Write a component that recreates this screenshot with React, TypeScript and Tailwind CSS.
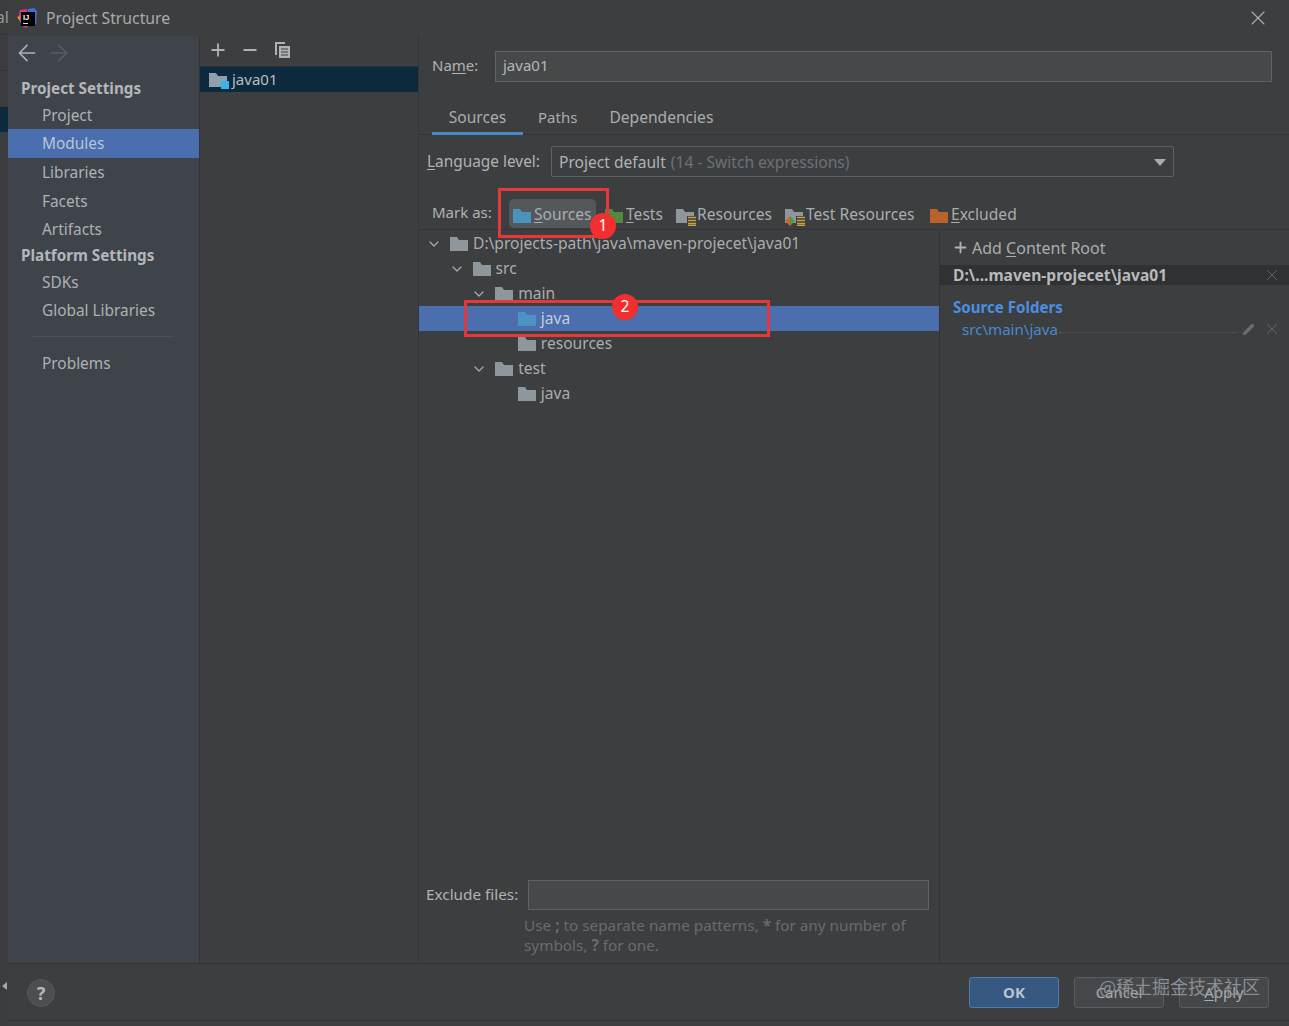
import type { ReactNode } from 'react'
import { ArrowLeft, ArrowRight, ChevronDown, Minus, Pencil, Plus, X } from 'lucide-react'

const FONT = "font-['Noto_Sans','Open_Sans',sans-serif]"

function Folder({ color = '#8e979c', className = '' }: { color?: string; className?: string }) {
  return (
    <svg width="18" height="15" viewBox="0 0 18 15" className={`shrink-0 ${className}`}>
      <path d="M0 1h7l2 3h9v11H0z" fill={color} />
    </svg>
  )
}

function Stack() {
  return (
    <svg width="9" height="10" viewBox="0 0 9 10" className="absolute right-[-2px] bottom-[-3px]">
      <rect width="9" height="10" fill="#3c3e40" />
      <path d="M1 1.5h8M1 4.5h8M1 7.5h8M1 9.5h8" stroke="#c9a13f" strokeWidth="1.4" />
    </svg>
  )
}

function MarkItem({ icon, children, w }: { icon: ReactNode; children: ReactNode; w: string }) {
  return (
    <div className={`flex h-[33px] shrink-0 items-center gap-[3px] pt-[4px] ${w}`}>
      {icon}
      <span className="whitespace-nowrap">{children}</span>
    </div>
  )
}

function TreeRow({ depth, open, label, color, selected }: { depth: number; open?: boolean; label: string; color?: string; selected?: boolean }) {
  return (
    <div className={`flex h-[25px] items-center ${selected ? 'bg-[#4b6eaf] text-[#c6cdd6]' : ''}`}>
      <div style={{ width: 7 + depth * 22.6 }} className="shrink-0" />
      <div className="w-[24px] shrink-0">{open && <ChevronDown size={16} strokeWidth={1.8} className="text-[#a9adb0]" />}</div>
      <Folder color={color} />
      <span className="ml-[5px] whitespace-nowrap">{label}</span>
    </div>
  )
}

function SideItem({ label, active, h = 'h-[28.5px]' }: { label: string; active?: boolean; h?: string }) {
  return (
    <div className={`flex items-center pl-[34px] text-[15.4px] ${h} ${active ? 'bg-[#4b6eaf] text-[#b9c5d6]' : 'pt-[2px] text-[#aeb1b3]'}`}>{label}</div>
  )
}

function SideHead({ label, h }: { label: string; h: string }) {
  return <div className={`flex items-center pl-[13px] text-[15.25px] font-bold text-[#b4b7b9] ${h}`}>{label}</div>
}

function FooterButton({ children, primary }: { children: ReactNode; primary?: boolean }) {
  return (
    <div className={`flex h-[31px] w-[90px] items-center justify-center rounded-[3px] border ${primary ? 'border-[#4c7db0] bg-[#365880] font-bold text-[#b6c4d4]' : 'border-[#5a5d5f] bg-[#45484a] text-[#a9acae]'}`}>
      {children}
    </div>
  )
}

export default function App() {
  return (
    <div className={`relative flex h-[1026px] w-[1289px] overflow-hidden bg-[#3c3e40] text-[15.6px] leading-none text-[#aaadaf] ${FONT}`}>
      {/* what shows of the main window behind the dialog */}
      <div className="flex w-[8px] shrink-0 flex-col overflow-hidden bg-[#3a3c3d]">
        <div className="h-[35px] whitespace-nowrap border-b border-[#323436] pt-[10px] text-[#999]"><span className="ml-[-4px]">al</span></div>
        <div className="h-[36px] border-b border-[#323436]" />
        <div className="mt-[36px] h-[25px] bg-[#0d293e]" />
        <div className="mt-[850px] ml-[2px] h-0 w-0 border-y-[4px] border-r-[5px] border-y-transparent border-r-[#aaa]" />
      </div>

      <div className="flex h-[1021px] min-w-0 flex-1 flex-col border-b border-[#2f3133]">
        {/* title bar */}
        <div className="flex h-[36px] shrink-0 items-center pl-[9px] pr-[19px]">
          <svg width="21" height="21" viewBox="0 0 21 21">
            <path d="M3 2l7-1 1 5-6 5H1z" fill="#e0317f" />
            <path d="M11 1l6-1 3 3-1 14-8-8z" fill="#3e6fd8" />
            <path d="M1 9l4 9 5 2 2-8z" fill="#d2408f" />
            <path d="M0 9l3-1v5z" fill="#f08b2d" />
            <rect x="4" y="4" width="14" height="14" fill="#000" />
            <rect x="6" y="15" width="5" height="1" fill="#ddd" />
            <text x="6" y="11.5" fontSize="7.5" fontWeight="700" fill="#fff" fontFamily="Liberation Sans, sans-serif">IJ</text>
          </svg>
          <span className="ml-[8px] pt-[2px] text-[15.75px] text-[#a9acae]">Project Structure</span>
          <X size={24} strokeWidth={1.1} className="ml-auto text-[#afb1b3]" />
        </div>

        <div className="flex min-h-0 flex-1">
          {/* settings sidebar */}
          <div className="flex w-[191px] shrink-0 flex-col bg-[#3f444b]">
            <div className="flex h-[34px] shrink-0 items-center gap-[6px] pl-[6px]">
              <ArrowLeft size={26} strokeWidth={1.5} className="text-[#afb1b3]" />
              <ArrowRight size={26} strokeWidth={1.5} className="text-[#585c60]" />
            </div>
            <SideHead label="Project Settings" h="h-[31px] mt-[3px]" />
            <SideItem label="Project" h="h-[25px] pb-[3px]" />
            <SideItem label="Modules" active />
            <SideItem label="Libraries" />
            <SideItem label="Facets" />
            <SideItem label="Artifacts" />
            <SideHead label="Platform Settings" h="h-[24px] pt-[2px]" />
            <SideItem label="SDKs" />
            <SideItem label="Global Libraries" />
            <div className="mx-[25px] mt-[12px] mb-[11px] h-px bg-[#4b5057]" />
            <SideItem label="Problems" />
          </div>

          {/* module list */}
          <div className="flex w-[220px] shrink-0 flex-col border-x border-[#333537]">
            <div className="flex h-[31px] shrink-0 items-center gap-[12px] border-b border-[#2f3133] pb-[3px] pl-[7.5px] text-[#afb1b3]">
              <Plus size={20} strokeWidth={2.2} />
              <Minus size={20} strokeWidth={2.2} />
              <svg width="17" height="18" viewBox="0 0 17 18" className="ml-[2.5px]">
                <path d="M1 1h10v2H3v11H1z" fill="#afb1b3" />
                <path d="M5 5h11v12H5z" fill="#afb1b3" />
                <path d="M7 8h7M7 11h7M7 14h7" stroke="#3c3e40" />
              </svg>
            </div>
            <div className="flex h-[25px] shrink-0 items-center bg-[#0d293e] pl-[9px] text-[15px] text-[#bbbec0]">
              <div className="relative">
                <Folder color="#8fa0ad" />
                <div className="absolute right-[-2px] bottom-[-2px] h-[8px] w-[8px] bg-[#35b6e6]" />
              </div>
              <span className="ml-[5px]">java01</span>
            </div>
          </div>

          {/* module editor */}
          <div className="flex min-w-0 flex-1 flex-col">
            <div className="flex h-[46px] shrink-0 items-end pl-[13px] pr-[17px]">
              <span className="mb-[9px] w-[63px] shrink-0 text-[15px] text-[#b0b3b5]">Na<span className="underline underline-offset-2">m</span>e:</span>
              <div className="flex h-[31px] flex-1 items-center border border-[#5e6264] bg-[#45494a] pb-[2px] pl-[7px] text-[15px] text-[#b5b7b9]">java01</div>
            </div>

            <div className="mt-[22px] flex h-[31px] shrink-0 items-start border-b border-[#323436] pl-[13px]">
              <div className="flex h-[31px] w-[91px] items-start justify-center border-b-[3px] border-[#4a88c7] pt-[6px]">Sources</div>
              <div className="ml-[15px] pt-[6px] text-[15px]">Paths</div>
              <div className="ml-[32px] pt-[6px]">Dependencies</div>
            </div>

            <div className="mt-[11px] flex h-[31px] shrink-0 items-center pl-[8px]">
              <span className="w-[124px] shrink-0 text-[15.4px] text-[#b0b3b5]"><span className="underline underline-offset-2">L</span>anguage level:</span>
              <div className="flex h-[31px] w-[623px] items-center rounded-[2px] border border-[#5e6264] bg-[#3c3f41] pl-[7px] pr-[7px] pt-[2px]">
                <span className="text-[#b0b3b5]">Project default</span>
                <span className="ml-[5px] text-[#6e7173]">(14 - Switch expressions)</span>
                <div className="ml-auto h-0 w-0 border-x-[6px] border-t-[7px] border-x-transparent border-t-[#a9acae]" />
              </div>
            </div>

            <div className="mt-[20px] flex h-[33px] shrink-0 items-center border-b border-[#323436] pl-[13px]">
              <span className="mb-[1px] w-[77px] shrink-0 text-[15px] text-[#b0b3b5]">Mark as:</span>
              <div className="flex h-[29px] w-[87px] shrink-0 items-center gap-[3px] rounded-[5px] bg-[#55585b] pl-[4px] pt-[4px]">
                <Folder color="#4a93bb" />
                <span><span className="underline underline-offset-2">S</span>ources</span>
              </div>
              <MarkItem w="w-[71px] ml-[9px]" icon={<Folder color="#4f8a3f" />}>
                <span className="underline underline-offset-2">T</span>ests
              </MarkItem>
              <MarkItem w="w-[109px]" icon={<div className="relative"><Folder /><Stack /></div>}>Resources</MarkItem>
              <MarkItem w="w-[145px]" icon={
                <div className="relative">
                  <Folder />
                  <Stack />
                  <svg width="10" height="10" viewBox="0 0 10 10" className="absolute bottom-[-3px] left-0">
                    <path d="M5 0L0 5l5 5z" fill="#d0622f" />
                    <path d="M5 0l5 5-5 5z" fill="#4f9a3f" />
                  </svg>
                </div>
              }>Test Resources</MarkItem>
              <MarkItem w="" icon={<Folder color="#b8622c" />}>
                <span className="underline underline-offset-2">E</span>xcluded
              </MarkItem>
            </div>

            <div className="flex min-h-0 flex-1">
              <div className="flex w-[521px] shrink-0 flex-col border-r border-[#323436]">
                <div className="h-[1px]" />
                <TreeRow depth={0} open label="D:\projects-path\java\maven-projecet\java01" />
                <TreeRow depth={1} open label="src" />
                <TreeRow depth={2} open label="main" />
                <TreeRow depth={3} label="java" color="#4a93c4" selected />
                <TreeRow depth={3} label="resources" />
                <TreeRow depth={2} open label="test" />
                <TreeRow depth={3} label="java" />
                <div className="mt-auto flex items-center pl-[7px] pr-[10px] text-[15.3px] text-[#b0b3b5]">
                  <span className="mt-[-1px] w-[102px] shrink-0">Exclude files:</span>
                  <div className="h-[30px] flex-1 border border-[#5e6264] bg-[#45494a]" />
                </div>
                <div className="mb-[8px] mt-[5px] pl-[105px] pr-[20px] text-[15.3px] leading-[20px] text-[#696c6e]">
                  Use <b>;</b> to separate name patterns, <b>*</b> for any number of symbols, <b>?</b> for one.
                </div>
              </div>

              <div className="flex min-w-0 flex-1 flex-col">
                <div className="flex h-[35px] shrink-0 items-center pl-[12px]">
                  <Plus size={17} strokeWidth={2.6} className="text-[#afb1b3]" />
                  <span className="ml-[3px] text-[16px]">Add <span className="underline underline-offset-2">C</span>ontent Root</span>
                </div>
                <div className="flex h-[20px] shrink-0 items-center bg-[#2f3133] pl-[13px] pr-[8px] pt-[2px] font-bold text-[#b7babc]">
                  D:\...maven-projecet\java01
                  <X size={18} strokeWidth={1.1} className="ml-auto mt-[-2px] text-[#6b6e70]" />
                </div>
                <div className="mt-[15px] pl-[13px] text-[15.1px] font-bold text-[#4a8fe0]">Source Folders</div>
                <div className="mt-[4px] flex h-[20px] items-center pl-[22px] pr-[8px] text-[#4a8ad0]">
                  <span className="whitespace-nowrap text-[15.1px]">src\main\java</span>
                  <div className="mx-[1px] mt-[7px] h-0 flex-1 border-b border-dotted border-[#5a5d5f]" />
                  <Pencil size={13} fill="#6a6d70" strokeWidth={1} className="ml-[4px] text-[#6a6d70]" />
                  <X size={18} strokeWidth={1.1} className="ml-[8px] text-[#6b6e70]" />
                </div>
              </div>
            </div>
          </div>
        </div>

        {/* footer */}
        <div className="flex h-[57px] shrink-0 items-center border-t border-[#303234] pl-[19px] pr-[20px] text-[15px]">
          <div className="mt-[1px] flex h-[28px] w-[28px] items-center justify-center rounded-full border border-[#56595b] bg-[#4c4f51] text-[18px] font-bold text-[#b5b7b9]">?</div>
          <div className="ml-auto flex gap-[15px]">
            <FooterButton primary>OK</FooterButton>
            <FooterButton>Cancel</FooterButton>
            <FooterButton><span><span className="underline underline-offset-2">A</span>pply</span></FooterButton>
          </div>
        </div>
      </div>

      {/* screenshot annotations and watermark */}
      <div className="absolute left-[498px] top-[188px] h-[50px] w-[111px] border-[3px] border-[#e5383b]" />
      <div className="absolute left-[464px] top-[300px] h-[37px] w-[306px] border-[3px] border-[#e5383b]" />
      <div className="absolute left-[590px] top-[213px] flex h-[26px] w-[26px] items-center justify-center rounded-full bg-[#f22f2f] text-white">1</div>
      <div className="absolute left-[612px] top-[294px] flex h-[26px] w-[26px] items-center justify-center rounded-full bg-[#f22f2f] text-white">2</div>
      <div className="absolute left-[1099px] top-[977px] whitespace-nowrap text-[18px] text-[#8c8f91] font-['Noto_Sans_CJK_SC',sans-serif]">@稀土掘金技术社区</div>
    </div>
  )
}
